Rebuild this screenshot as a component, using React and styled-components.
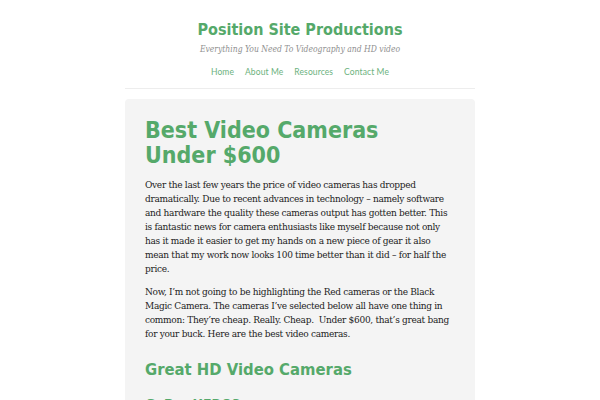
import React from 'react'
import styled, { createGlobalStyle } from 'styled-components'

const Global = createGlobalStyle`
  html, body { margin: 0; padding: 0; background: #fff; }
  body { font-family: "DejaVu Serif", serif; }
`

const Page = styled.div`
  width: 350px;
  margin: 0 auto;
`

const Header = styled.header`
  text-align: center;
  padding: 19.5px 0 10.3px;
  border-bottom: 1px solid #ededed;
`

const SiteTitle = styled.h1`
  margin: 0;
  font-family: "DejaVu Sans", sans-serif;
  font-stretch: condensed;
  font-weight: bold;
  font-size: 16px;
  line-height: 20px;
  color: #55a96a;
`

const Tagline = styled.p`
  margin: 3.3px 0 0;
  font-family: "DejaVu Serif", serif;
  font-stretch: condensed;
  font-style: italic;
  font-size: 8.5px;
  line-height: 12px;
  color: #8f8f8f;
`

const Nav = styled.nav`
  display: flex;
  justify-content: center;
  gap: 11px;
  margin-top: 11px;
`

const NavLink = styled.a`
  font-family: Lato, sans-serif;
  font-size: 8.5px;
  letter-spacing: 0.1px;
  line-height: 12px;
  color: #6cb27e;
  text-decoration: none;
`

const Card = styled.article`
  margin-top: 10px;
  background: #f4f4f4;
  border-radius: 4px;
  padding: 19px 20px 20px;
`

const Title = styled.h2`
  margin: ${p => p.m};
  font-family: "DejaVu Sans", sans-serif;
  font-stretch: condensed;
  font-weight: bold;
  font-size: ${p => p.size}px;
  line-height: ${p => p.lh}px;
  color: #55a96a;
`

const Para = styled.p`
  margin: 0 0 9px;
  font-family: "DejaVu Serif", serif;
  font-stretch: condensed;
  font-size: 10px;
  letter-spacing: -0.3px;
  line-height: 14px;
  color: #1c1c1c;
`

function App() {
  return (
    <>
      <Global />
      <Page>
        <Header>
          <SiteTitle>Position Site Productions</SiteTitle>
          <Tagline>Everything You Need To Videography and HD video</Tagline>
          <Nav>
            <NavLink href="#">Home</NavLink>
            <NavLink href="#">About Me</NavLink>
            <NavLink href="#">Resources</NavLink>
            <NavLink href="#">Contact Me</NavLink>
          </Nav>
        </Header>
        <Card>
          <Title size={23} lh={25} m="0 0 10px">Best Video Cameras Under $600</Title>
          <Para>
            Over the last few years the price of video cameras has dropped dramatically. Due to recent advances in technology – namely software and hardware the quality these cameras output has gotten better. This is fantastic news for camera enthusiasts like myself because not only has it made it easier to get my hands on a new piece of gear it also mean that my work now looks 100 time better than it did – for half the price.
          </Para>
          <Para>
            Now, I’m not going to be highlighting the Red cameras or the Black Magic Camera. The cameras I’ve selected below all have one thing in common: They’re cheap. Really. Cheap.&nbsp; Under $600, that’s great bang for your buck. Here are the best video cameras.
          </Para>
          <Title size={16.5} lh={22} m="18px 0 14px">Great HD Video Cameras</Title>
          <Title size={14} lh={18} m="0 0 10px">GoPro HERO3</Title>
        </Card>
      </Page>
    </>
  )
}

export default App
